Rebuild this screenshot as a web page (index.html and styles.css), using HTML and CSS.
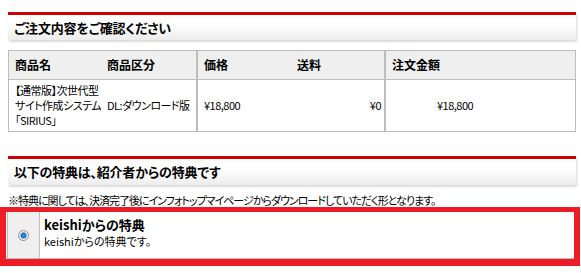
FILE: index.html
```html
<!DOCTYPE html>
<html lang="ja">
<head>
    <meta charset="UTF-8">
    <title>ご注文内容の確認</title>
    <link rel="stylesheet" href="styles.css">
</head>
<body>
    <div class="container">
        <h2 class="section-title">ご注文内容をご確認ください</h2>
        <table class="order">
            <tr>
                <th class="c-name">商品名</th>
                <th class="c-type">商品区分</th>
                <th class="c-price group">価格</th>
                <th class="c-ship">送料</th>
                <th class="c-total group">注文金額</th>
            </tr>
            <tr>
                <td class="c-name">【通常版】次世代型<br>サイト作成システム<br>「SIRIUS」</td>
                <td class="c-type">DL:ダウンロード版</td>
                <td class="c-price group">¥18,800</td>
                <td class="c-ship num">¥0</td>
                <td class="c-total group total">¥18,800</td>
            </tr>
        </table>

        <h2 class="section-title second">以下の特典は、紹介者からの特典です</h2>
        <p class="note">※特典に関しては、決済完了後にインフォトップマイページからダウンロードしていただく形となります。</p>

        <div class="bonus-box">
            <div class="bonus">
                <div class="bonus-radio"><span class="radio"></span></div>
                <div class="bonus-text">
                    <p class="bonus-name">keishiからの特典</p>
                    <p class="bonus-desc">keishiからの特典です。</p>
                </div>
            </div>
        </div>
    </div>
</body>
</html>
```

FILE: styles.css
```css
body {
    margin: 0;
    padding: 0;
    background-color: #fff;
    color: #000;
    font-family: "Noto Sans CJK JP", "Liberation Sans", sans-serif;
    font-feature-settings: "palt";
    font-size: 11px;
}

.container {
    width: 568px;
    margin-left: 8px;
    padding-top: 12px;
}

.section-title {
    margin: 0;
    height: 25px;
    line-height: 25px;
    padding-left: 6px;
    border-top: 3px solid #cc0000;
    background: linear-gradient(to bottom, #fff 40%, #ececec);
    box-shadow: 1px 2px 2px rgba(0, 0, 0, 0.15);
    font-size: 13px;
    font-weight: bold;
    letter-spacing: -0.2px;
}

.section-title.second {
    margin-top: 24px;
    height: 26px;
    line-height: 26px;
}

/* order table */
.order {
    width: 568px;
    margin-top: 10px;
    border-collapse: collapse;
    border: 1px solid #bdbdbd;
    table-layout: fixed;
}

.order th, .order td {
    text-align: left;
    padding: 0 0 0 6px;
    border-top: 1px solid #bdbdbd;
    vertical-align: middle;
    white-space: nowrap;
    overflow: hidden;
}

.order th {
    height: 28px;
    background-color: #efefef;
    font-size: 12px;
    font-weight: bold;
    line-height: 16px;
}

.order td {
    height: 51px;
    line-height: 15px;
    letter-spacing: -0.5px;
}

.order .group {
    border-left: 2px solid #bdbdbd;
}

.c-name { width: 86px; }
.c-type { width: 89px; }
.c-price { width: 87px; }
.c-ship { width: 87px; }

.order .num {
    text-align: right;
    padding-right: 3px;
}

.order .total {
    padding-left: 51px;
}

.note {
    margin: 8px 0 0;
    line-height: 14px;
    letter-spacing: -1px;
    white-space: nowrap;
}

/* bonus */
.bonus-box {
    margin: 0 0 0 -8px;
    width: 567px;
    border: 6px solid #ee1d25;
    border-top-width: 5px;
    border-bottom-width: 7px;
    padding-left: 1px;
}

.bonus {
    display: flex;
    border-left: 1px solid #bdbdbd;
    border-bottom: 1px solid #bdbdbd;
    height: 46px;
}

.bonus-radio {
    width: 31px;
    background-color: #efefef;
    border-right: 1px solid #bdbdbd;
    display: flex;
    align-items: center;
    justify-content: center;
}

.radio {
    width: 9px;
    height: 9px;
    border-radius: 50%;
    border: 1px solid #8a8f99;
    background: radial-gradient(circle at 50% 50%, #3c8ee0 0, #1f6cbf 2.5px, #e7e7e7 3.5px, #f8f8f8 5px);
}

.bonus-text {
    padding: 4px 0 0 4px;
}

.bonus-name {
    margin: 0;
    font-size: 13px;
    font-weight: bold;
    line-height: 18px;
}

.bonus-desc {
    margin: 0;
    line-height: 14px;
}
```
